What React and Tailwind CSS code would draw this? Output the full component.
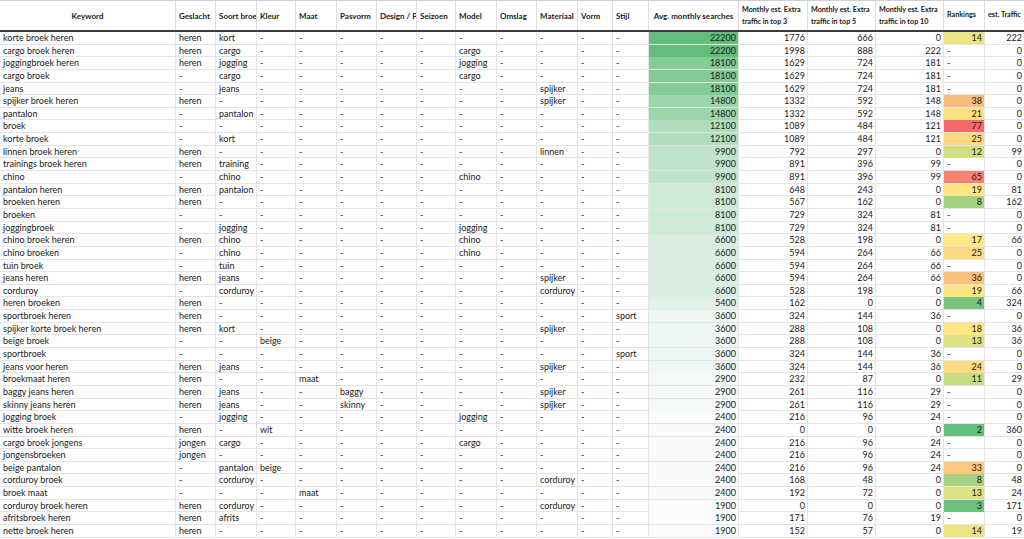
const raw = `korte broek heren|heren|kort||22200 1776 666 0 14 222
cargo broek heren|heren|cargo|7=cargo|22200 1998 888 222 - 0
joggingbroek heren|heren|jogging|7=jogging|18100 1629 724 181 - 0
cargo broek||cargo|7=cargo|18100 1629 724 181 - 0
jeans||jeans|9=spijker|18100 1629 724 181 - 0
spijker broek heren|heren||9=spijker|14800 1332 592 148 38 0
pantalon||pantalon||14800 1332 592 148 21 0
broek||||12100 1089 484 121 77 0
korte broek||kort||12100 1089 484 121 25 0
linnen broek heren|heren||9=linnen|9900 792 297 0 12 99
trainings broek heren|heren|training||9900 891 396 99 - 0
chino||chino|7=chino|9900 891 396 99 65 0
pantalon heren|heren|pantalon||8100 648 243 0 19 81
broeken heren|heren|||8100 567 162 0 8 162
broeken||||8100 729 324 81 - 0
joggingbroek||jogging|7=jogging|8100 729 324 81 - 0
chino broek heren|heren|chino|7=chino|6600 528 198 0 17 66
chino broeken||chino|7=chino|6600 594 264 66 25 0
tuin broek||tuin||6600 594 264 66 - 0
jeans heren|heren|jeans|9=spijker|6600 594 264 66 36 0
corduroy||corduroy|9=corduroy|6600 528 198 0 19 66
heren broeken|heren|||5400 162 0 0 4 324
sportbroek heren|heren||11=sport|3600 324 144 36 - 0
spijker korte broek heren|heren|kort|9=spijker|3600 288 108 0 18 36
beige broek|||2=beige|3600 288 108 0 13 36
sportbroek|||11=sport|3600 324 144 36 - 0
jeans voor heren|heren|jeans|9=spijker|3600 324 144 36 24 0
broekmaat heren|heren||3=maat|2900 232 87 0 11 29
baggy jeans heren|heren|jeans|4=baggy,9=spijker|2900 261 116 29 - 0
skinny jeans heren|heren|jeans|4=skinny,9=spijker|2900 261 116 29 - 0
jogging broek||jogging|7=jogging|2400 216 96 24 - 0
witte broek heren|heren||2=wit|2400 0 0 0 2 360
cargo broek jongens|jongen|cargo|7=cargo|2400 216 96 24 - 0
jongensbroeken|jongen|||2400 216 96 24 - 0
beige pantalon||pantalon|2=beige|2400 216 96 24 33 0
corduroy broek||corduroy|9=corduroy|2400 168 48 0 8 48
broek maat|||3=maat|2400 192 72 0 13 24
corduroy broek heren|heren|corduroy|9=corduroy|1900 0 0 0 3 171
afritsbroek heren|heren|afrits||1900 171 76 19 - 0
nette broek heren|heren|||1900 152 57 0 14 19`;

const rows = raw.split("\n").map((l) => {
  const [kw, g, s, ex, nums] = l.split("|");
  const attrs = Array(12).fill("-");
  if (g) attrs[0] = g;
  if (s) attrs[1] = s;
  if (ex) ex.split(",").forEach((p) => { const [i, v] = p.split("="); attrs[+i] = v; });
  return { kw, attrs, n: nums.split(" ") };
});

const cols = "grid grid-cols-[176px_40px_41px_39px_41px_40px_40px_39px_41px_40px_41px_35px_36px_90px_69px_68px_68px_41px_39px]";

function mix(a, b, t) {
  const p = (h) => [1, 3, 5].map((i) => parseInt(h.slice(i, i + 2), 16));
  const x = p(a), y = p(b);
  return `rgb(${x.map((v, i) => Math.round(v + (y[i] - v) * t)).join(",")})`;
}
const avgColor = (v) => mix("#fcfcff", "#63be7b", (v - 1900) / (22200 - 1900));
const rankColor = (v) => {
  const mid = 16;
  if (v <= mid) return mix("#63be7b", "#ffeb84", (v - 2) / (mid - 2));
  return mix("#ffeb84", "#f8696b", (v - mid) / (77 - mid));
};

const heads = ["Keyword", "Geslacht", "Soort broek", "Kleur", "Maat", "Pasvorm", "Design / Print", "Seizoen", "Model", "Omslag", "Materiaal", "Vorm", "Stijl", "Avg. monthly searches"];

export default function App() {
  return (
    <div className="w-[1024px] h-[539px] overflow-hidden bg-white text-[#1a1a1a]" style={{ fontFamily: "Lato, 'Open Sans', sans-serif" }}>
      <div className={`${cols} h-[32px] border-b-2 border-[#3a3a3a] border-t border-t-[#d0d0d0]`}>
        {heads.map((h, i) => (
          <div key={i} className={`flex items-center ${i === 0 || i === 13 ? "justify-center" : "pl-[3px]"} overflow-hidden whitespace-nowrap text-[8px] font-bold border-r border-[#dcdcdc]`}>{h}</div>
        ))}
        {["Monthly est. Extra traffic in top 3", "Monthly est. Extra traffic in top 5", "Monthly est. Extra traffic in top 10"].map((h, i) => (
          <div key={i} className="flex items-center pl-[3px] text-[7.2px] font-bold leading-[12px] border-r border-[#dcdcdc]">{h}</div>
        ))}
        <div className="flex items-center pl-[3px] text-[7.2px] font-bold border-r border-[#dcdcdc]">Rankings</div>
        <div className="flex items-center pl-[3px] text-[7.2px] font-bold overflow-hidden whitespace-nowrap">est. Traffic</div>
      </div>
      {rows.map((r, ri) => (
        <div key={ri} className={`${cols} h-[12.65px] text-[9px] leading-[12px] border-b border-[#e4e4e4]`}>
          <div className="pl-[3px] overflow-hidden whitespace-nowrap border-r border-[#e4e4e4]">{r.kw}</div>
          {r.attrs.map((c, ci) => (
            <div key={ci} className="pl-[3px] overflow-hidden whitespace-nowrap border-r border-[#e4e4e4]">{c}</div>
          ))}
          <div className="text-right pr-[2px] border-r border-[#e4e4e4]" style={{ background: avgColor(+r.n[0]) }}>{r.n[0]}</div>
          {r.n.slice(1, 4).map((c, ci) => (
            <div key={ci} className="text-right pr-[2px] border-r border-[#e4e4e4]">{c}</div>
          ))}
          {r.n[4] !== "-" ? (
            <div className="text-right pr-[2px] border-r border-[#e4e4e4]" style={{ background: rankColor(+r.n[4]) }}>{r.n[4]}</div>
          ) : (
            <div className="pl-[3px] border-r border-[#e4e4e4]">-</div>
          )}
          <div className="text-right pr-[2px]">{r.n[5]}</div>
        </div>
      ))}
    </div>
  );
}
